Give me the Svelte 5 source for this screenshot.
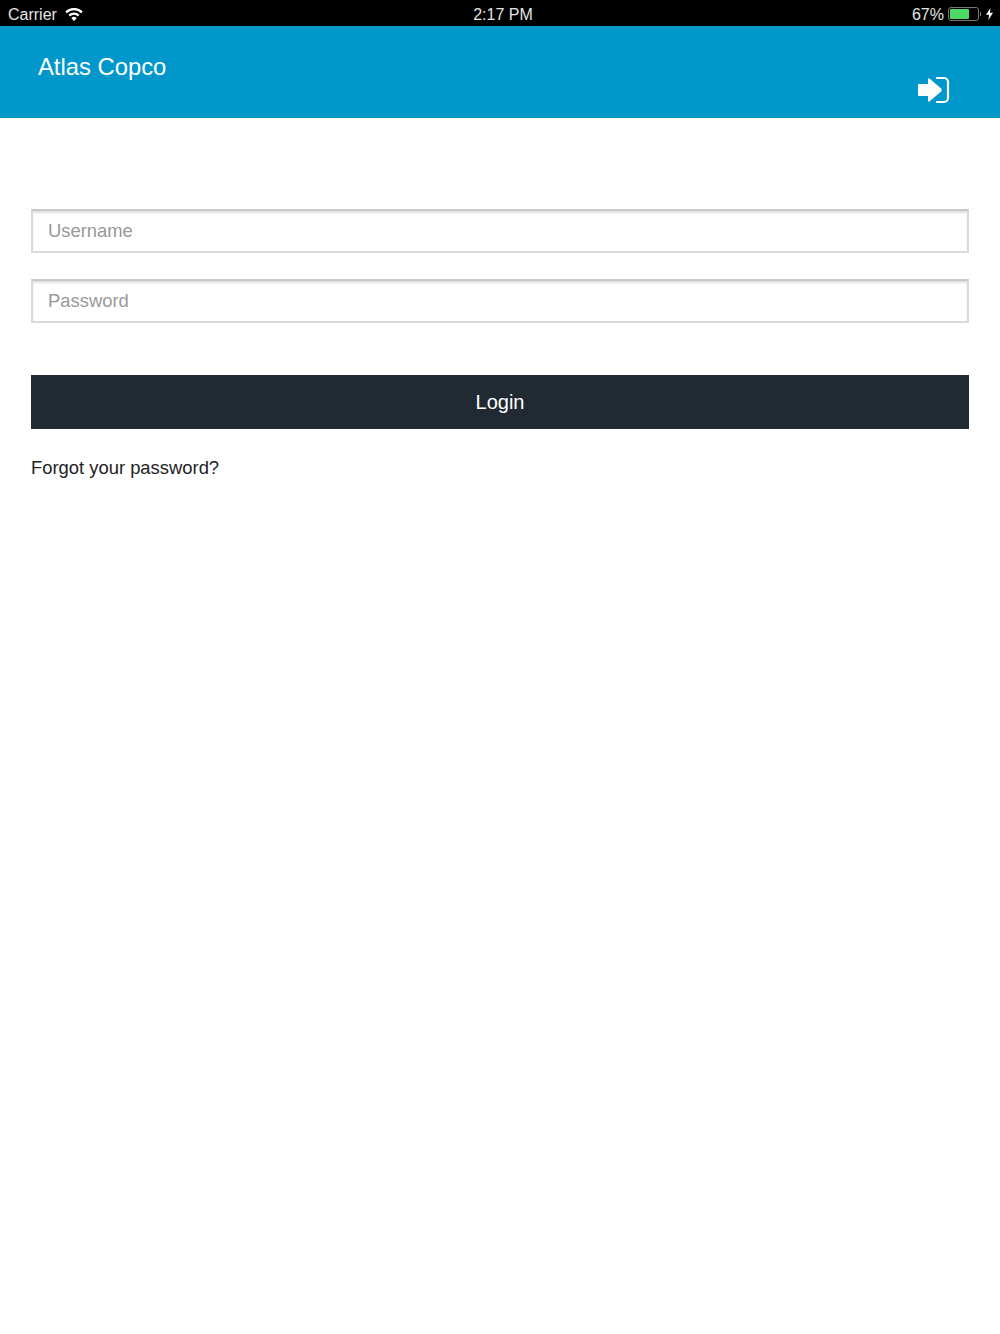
<script>
  let username = $state('');
  let password = $state('');
</script>

<div class="page">
  <div class="statusbar">
    <div class="status-left">
      <span>Carrier</span>
      <svg class="wifi" width="18" height="13" viewBox="0 0 18 13">
        <path d="M9 13 L6.3 10.2 A3.8 3.8 0 0 1 11.7 10.2 Z" fill="#fff" />
        <path d="M4.3 7.6 A6.7 6.7 0 0 1 13.7 7.6" fill="none" stroke="#fff" stroke-width="2.3" />
        <path d="M1.1 4.4 A11.2 11.2 0 0 1 16.9 4.4" fill="none" stroke="#fff" stroke-width="2.3" />
      </svg>
    </div>
    <div class="status-time">2:17 PM</div>
    <div class="status-right">
      <span>67%</span>
      <svg class="battery" width="33" height="14" viewBox="0 0 33 14">
        <rect x="0.5" y="0.5" width="30" height="13" rx="2.5" fill="none" stroke="#777" />
        <rect x="2" y="2" width="19" height="10" rx="1" fill="#4cd964" />
        <path d="M32 5 A2 2 0 0 1 32 9 Z" fill="#888" />
      </svg>
      <svg class="bolt" width="7" height="12" viewBox="0 0 7 12">
        <path d="M4.4 0 L0 6.8 H3 L2.4 12 L7 4.8 H3.9 Z" fill="#fff" />
      </svg>
    </div>
  </div>

  <header class="navbar">
    <div class="title">Atlas Copco</div>
    <svg class="login-icon" width="32" height="28" viewBox="0 0 32 28">
      <path d="M1 8 H10 V3.5 Q10 1.5 12 3 L23.2 12.6 Q24.4 14 23.2 15.4 L12 25 Q10 26.5 10 24.5 V20 H1 Q0 20 0 19 V9 Q0 8 1 8 Z" fill="#fff" />
      <path d="M18 2 H26 A4 4 0 0 1 30 6 V22 A4 4 0 0 1 26 26 H18" fill="none" stroke="#fff" stroke-width="2.2" />
    </svg>
  </header>

  <form class="login-form" onsubmit={(e) => e.preventDefault()}>
    <input class="field" type="text" placeholder="Username" bind:value={username} />
    <input class="field" type="password" placeholder="Password" bind:value={password} />
    <button class="login-btn" type="submit">Login</button>
    <a class="forgot" href="#forgot">Forgot your password?</a>
  </form>
</div>

<style>
  :global(body) {
    background: #fff;
    font-family: "Liberation Sans", Arial, sans-serif;
  }

  .page {
    min-height: 1334px;
    background: #fff;
  }

  .statusbar {
    height: 26px;
    background: #000;
    color: #e4e4e4;
    font-size: 16px;
    display: grid;
    grid-template-columns: 1fr auto 1fr;
    align-items: center;
    padding: 4px 7px 0 8px;
    box-sizing: border-box;
  }

  .status-left {
    display: flex;
    align-items: center;
    gap: 8px;
  }

  .wifi {
    margin-top: -2px;
  }

  .status-time {
    padding-left: 5px;
  }

  .status-right {
    display: flex;
    align-items: center;
    justify-content: flex-end;
    gap: 5px;
  }

  .battery {
    margin-left: -1px;
    margin-top: -2px;
  }

  .bolt {
    margin-top: -2px;
  }

  .navbar {
    height: 92px;
    background: #0098cb;
    color: #fff;
    display: flex;
    justify-content: space-between;
    padding: 0 50px 0 38px;
    box-sizing: border-box;
  }

  .title {
    font-size: 23.8px;
    margin-top: 27px;
  }

  .login-icon {
    margin-top: 50px;
  }

  .login-form {
    display: flex;
    flex-direction: column;
    padding: 91px 31px 0;
  }

  .field {
    height: 44px;
    border: 2px solid #dadada;
    border-top-color: #c8c8c8;
    box-shadow: inset 0 2px 2px rgba(0, 0, 0, 0.12);
    border-radius: 0;
    padding: 0 15px;
    margin: 0 0 26px;
    font-family: inherit;
    font-size: 18.4px;
    color: #222;
    outline: none;
    box-sizing: border-box;
  }

  .field::placeholder {
    color: #999;
    opacity: 1;
  }

  .login-btn {
    height: 54px;
    margin-top: 26px;
    padding: 0;
    background: #212933;
    border: none;
    color: #fff;
    font-family: inherit;
    font-size: 20px;
    cursor: pointer;
  }

  .forgot {
    margin-top: 28px;
    color: #222;
    font-size: 18.4px;
    text-decoration: none;
  }
</style>
